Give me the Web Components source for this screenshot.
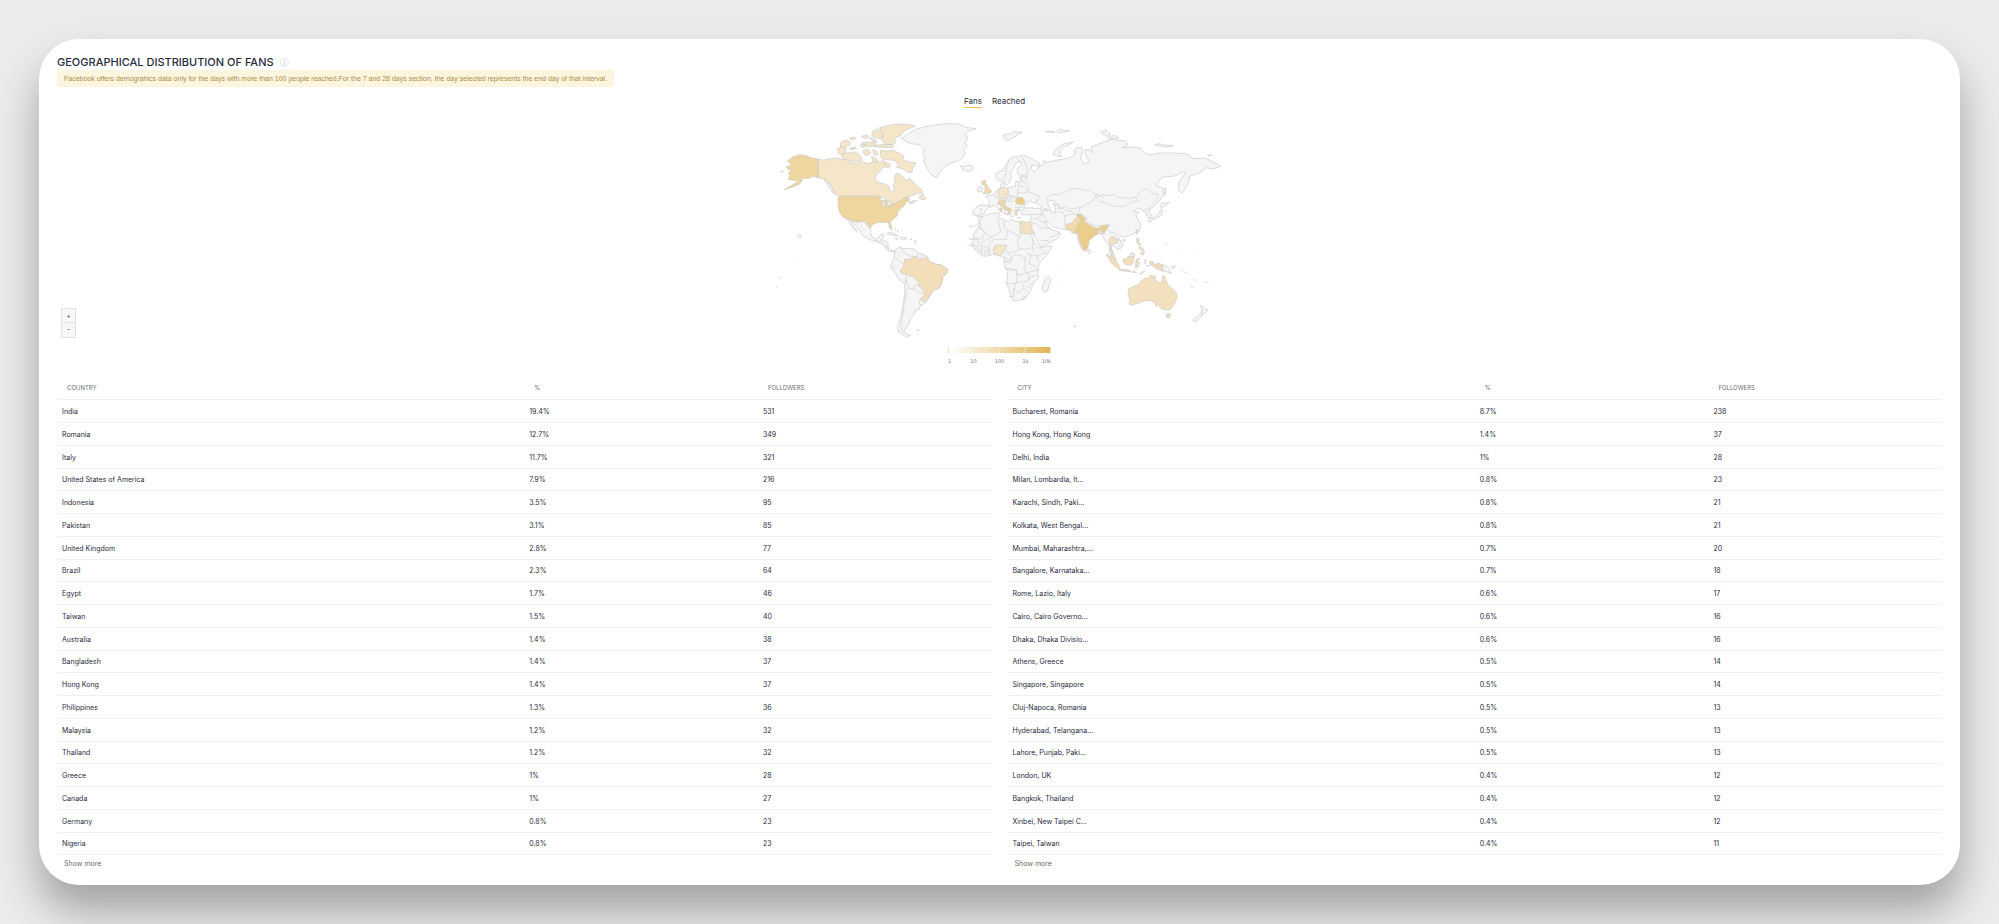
<!DOCTYPE html>
<html lang="en">
<head>
<meta charset="utf-8">
<title>Geographical distribution of fans</title>
<style>
  body {
    margin: 0;
    min-height: 100vh;
    box-sizing: border-box;
    padding: 39px;
    background: #ebebeb;
    font-family: Inter, "Liberation Sans", sans-serif;
    color: #2a2a3c;
  }
</style>
</head>
<body>
<report-card>
  <section-title slot="head">GEOGRAPHICAL DISTRIBUTION OF FANS</section-title>
  <info-notice slot="head">Facebook offers demograhics data only for the days with more than 100 people reached.For the 7 and 28 days section, the day selected represents the end day of that interval.</info-notice>
  <view-tabs></view-tabs>
  <fans-map></fans-map>
  <ranking-table slot="tables" kind="country"></ranking-table>
  <ranking-table slot="tables" kind="city"></ranking-table>
</report-card>

<script>
function define(name, html, setup) {
  const template = document.createElement('template');
  template.innerHTML = html;
  customElements.define(name, class extends HTMLElement {
    constructor() {
      super();
      this.attachShadow({ mode: 'open' }).append(template.content.cloneNode(true));
    }
    connectedCallback() {
      if (setup && !this.ready) { this.ready = true; setup(this, this.shadowRoot); }
    }
  });
}

define('report-card', `
<style>
  :host {
    display: flex; flex-direction: column;
    padding: 15px 18px 13px;
    background: #fff;
    border-radius: 40px;
    box-shadow: 0 26px 42px rgba(0, 0, 0, .31);
  }
  .head { display: flex; flex-direction: column; align-items: flex-start; }
  .tables { display: grid; grid-template-columns: 1fr 1fr; gap: 16px; margin-top: 11px; }
</style>
<div class="head"><slot name="head"></slot></div>
<slot></slot>
<div class="tables"><slot name="tables"></slot></div>
`);

define('section-title', `
<style>
  :host { display: flex; align-items: center; gap: 6px; height: 16px; }
  h1 { margin: 0; font: 500 11px/16px Inter, sans-serif; }
  svg { width: 9px; height: 9px; display: block; }
</style>
<h1><slot></slot></h1>
<svg viewBox="0 0 18 18" aria-hidden="true">
  <circle cx="9" cy="9" r="8" fill="#fff" stroke="#e1e4e9" stroke-width="2"/>
  <path d="M9 4v2M7 8h2v5M7 13h4" fill="none" stroke="#d3d7de" stroke-width="2"/>
</svg>
`);

define('info-notice', `
<style>
  :host {
    display: block; padding: 0 7px;
    background: #fef5df; color: #a88d4c;
    font: 7px/17px "Liberation Sans", sans-serif;
  }
</style>
<slot></slot>
`);

define('view-tabs', `
<style>
  :host { display: flex; justify-content: center; gap: 10px; margin: 9px 0 7px; padding-right: 10px; }
  button {
    padding: 0; border: 0; background: none; color: inherit;
    border-bottom: 1px solid transparent;
    font: 8px/11px Inter, sans-serif; cursor: pointer;
  }
  button[aria-pressed="true"] { border-color: #f3bf52; }
</style>
<button type="button" aria-pressed="true">Fans</button>
<button type="button" aria-pressed="false">Reached</button>
`);

define('fans-map', `
<style>
  :host { display: grid; grid-template-columns: 1fr 480px 1fr; }
  .zoom { align-self: end; margin: 0 0 2px 4px; width: 15px; display: flex; flex-direction: column; }
  .zoom button {
    box-sizing: border-box; height: 15px; padding: 0;
    border: 1px solid #e3e3e3; background: #f7f7f7; color: #555;
    font: 7px/12px Inter, sans-serif;
  }
  .zoom button + button { border-top: 0; }
  svg { display: block; width: 480px; height: 225px; }
  .legend { grid-column: 2; justify-self: center; width: 103px; margin-top: 7px; }
  .bar {
    height: 6px; display: flex; justify-content: space-between;
    background: linear-gradient(90deg, #fff, #f1dbaa 50%, #e3b353);
  }
  .bar i { width: 1px; background: #e9e3d8; }
  .labels {
    display: grid; grid-template-columns: 13px 25px 27px 25px 13px; margin-top: 4px;
    text-align: center; font: 5px/8px "DejaVu Sans", sans-serif; color: #777;
  }
  .labels :first-child { text-align: left; }
  .labels :last-child { text-align: right; }
  .land { fill: #f5f5f5; stroke: #c9c9c9; stroke-width: 2; stroke-linejoin: round; }
  .line { fill: none; stroke: #cfcfcf; stroke-width: 2; stroke-linejoin: round; }
  .sea { fill: #fff; stroke: #c9c9c9; stroke-width: 2; }
  .a { fill: #ecce8c; } .b { fill: #efd69f; } .c { fill: #f1dbab; }
  .d { fill: #f2dfb9; } .e { fill: #f3e0be; } .f { fill: #f5e6c9; }
</style>
<div class="zoom">
  <button type="button" aria-label="Zoom in">+</button>
  <button type="button" aria-label="Zoom out">-</button>
</div>
<svg viewBox="0 90 1440 675" role="img" aria-label="World map of fans">
  <g class="land">
    <!-- Greenland, Iceland -->
    <path d="M424 160L436 152 470 132 500 124 532 119 560 116 600 117 612 124 620 128 648 131 624 140 616 150 624 162 614 172 622 182 610 196 616 206 608 218 596 226 580 232 560 240 548 252 538 264 530 278 518 272 508 262 498 244 490 228 496 216 488 206 494 196 484 184 474 178 452 176 440 170z"/>
    <path d="M600 244l8-2 4 4 8-4 14-1 6 8-6 8-12 3-10-4-6-4 4-2z"/>
    <!-- Canada -->
    <path class="f" d="M175 222L191 226 205 222 229 219 247 223 261 224 271 232 291 236 311 232 325 236 337 232 345 222 357 234 367 226 375 230 377 240 366 250 360 260 350 268 345 284 360 294 378 298 388 306 392 320 398 322 402 310 400 298 406 288 402 276 410 264 420 268 430 276 438 286 448 280 460 290 470 302 484 312 487 322 470 326 450 334 436 340 450 342 444 350 440 336 430 340 420 348 408 356 396 356 388 350 378 346 364 342 356 334 238 334 226 326 218 308 206 292 192 282 175 278z"/>
    <path class="f" d="M478 334l10-10 2 10 8 6-4 4-14-2zM446 352l12-4 12-2-10 8-12 2zM232 190l12-4 16 4-6 14-10 6-8-4zM248 210l14-8 12 2 8-4 12 6 8 8 6 14-16 2-16-2-18-4-12-6zM268 190l14-4 8 4-14 4zM300 180l14-2 6 6-14 4zM310 196l14-4 8 12-10 8-10-4zM338 194l12 4 4 10-12 2zM334 214l14 6 8 10-16 2zM240 176l10-8 14-2 6 4 0 10-14 6-14 0zM268 160l12-4 8 4-8 4zM304 154l14-4 10 4-8 6-12-2zM306 172l20 0 18 2 0 10-16 0-18-6zM330 158l14 4 8 10-12 0zM344 180l54-2 4 6-10 4-46-2zM336 142l14-10 14 8 6 14-8 8-12-4-14-4zM358 128l24-6 20-4 30-1 34 5-14 8-20 8-10 14-18 8 2 14-20 6-16-8-6-14 8-10-8-8zM362 196l18 2 20-2 16 8 16 10-4 8 16 8 24 4-4 6-6 8-2 14-12 0-18-12-16-2 4-10-10-12-24-2-12-2-8-10zM376 234l10 0 6 8-8 6-12-4 4-4z"/>
    <!-- Alaska and the contiguous states -->
    <path class="b" d="M175 222L153 218 139 212 119 209 98 216 82 228 88 234 98 238 78 246 84 254 98 252 84 264 90 272 84 282 98 286 110 286 112 292 92 302 72 314 98 306 120 296 130 280 146 280 160 274 175 278z"/>
    <path d="M192 282L206 294 216 308 222 322 228 328 218 324 208 308 196 290zM62 259l8 0-4 3z"/>
    <path class="b" d="M238 334L356 334 364 340 376 344 388 350 388 358 398 358 410 354 424 346 436 338 446 336 446 346 436 354 432 364 424 368 414 380 412 392 400 402 390 412 396 426 394 434 388 428 386 414 374 412 358 412 342 416 334 422 332 430 324 424 316 412 306 408 298 412 276 408 262 402 248 396 240 384 235 368 234 350 234 338z"/>
    <path class="sea" d="M356 342l10-5 12 6 2 4-10 0-6-2zM368 350l5-2 1 14-6 4zM380 348l8 2 4 6-4 6-4-4zM386 366l12-5-2 4z"/>
    <!-- Mexico, Central America, Caribbean -->
    <path d="M262 403L276 408 298 412 306 408 316 412 324 424 332 430 332 444 336 456 346 462 356 458 360 450 372 448 370 458 364 464 376 468 384 472 384 486 388 496 398 498 408 496 406 502 394 500 380 494 372 480 356 472 346 470 330 464 312 454 304 446 300 436 290 426 284 416 276 410 280 422 290 436 292 442 284 436 272 420z"/>
    <path class="line" d="M344 466l10 0 4 4M362 466l-2 8M376 470l-10 6M384 486l-10-2"/>
    <path d="M380 446l10-4 14 4 12 8-12-2-12-4zM420 458l8-2 14 4-8 4-12-2zM406 460l8 2-8 0zM450 462l6 0-6 2zM404 430l4 4-4-2zM412 436l4 6-4-4zM466 466l1 4-2 6zM118 448l6 6-4 6-8-8z"/>
  </g>
  <g class="land" transform="translate(0 345)">
    <!-- South America -->
    <path d="M404 156L410 146 422 140 428 146 440 145 462 147 474 158 488 162 502 170 508 184 526 192 546 196 563 208 560 220 548 232 546 248 538 264 524 270 514 278 508 292 496 306 490 312 480 316 478 328 466 332 462 344 450 356 448 370 440 382 434 394 438 402 452 406 440 412 428 404 418 398 412 380 416 372 422 350 428 320 434 284 434 250 420 242 406 220 392 202 394 190 400 178 404 166z"/>
    <path class="d" d="M432 190L434 178 454 178 460 168 470 170 474 178 488 176 500 170 508 184 526 192 546 196 563 208 560 220 548 232 546 248 538 264 524 270 514 278 508 292 496 306 480 298 494 286 490 270 480 262 476 248 462 232 438 222 424 220 420 210 430 202z"/>
    <path class="line" d="M424 142l2 12 10 8 14 4 2 12M406 176l10 4 14 12M398 196l6 6-8 8M436 222l2 14-2 14M438 238l8 26 16 4 4-14 14 4M462 266l12 12 16 4M444 262l-6 24-6 30-4 34-6 28 8 20M480 298l-2 14 8 6M472 158l2 16M486 164l-2 12"/>
    <path d="M470 390l8 0-4 3zM58 232l7 2M48 262l4 1M113 176l2 1M628 76l4 0M602 127l3 1"/>
  </g>

  <g class="land" transform="translate(600 0)">
    <!-- Arctic islands -->
    <path d="M128 152l10-4 16-2 6-6 26 2-14 6-4 6-12 4-8 8-8 0-8-6zM256 140l18-2 10 4-8 1zM290 138l10-6 10 4 18 2-12 3-20 3zM280 210l4-14 14-10 14-10 28-5-14 10-16 6-10 10-2 12 8 4-8 2zM424 140l14-4 10 8 0 10 20-2 8 8-14 2-16-2-8-10-12-4zM586 180l10-4 20 4 24 2-14 4-22-2zM742 210l14 0-6 2zM64 266l1 3M84 276l2 3"/>
    <!-- Eurasian mainland -->
    <path d="M58 360l28 2 2-17-12-11 14-4 12 0 4-8 8-8 8-5 0-13 8-6 4 8-4 10 12 2 16-6 8 0 2-16 8 2 8-2-6-8 2-4 22-2-4-4-14 2-12-8 0-14 14-12-6-10-12 6-8 16-10 12 4 14-4 14-10 12-6-6-6-10-12 2-8-10 0-14 20-8 12-20 10-16 20-6 20-3 14 5 16 8 20 12-2 8-22-4-4 10 10 12 6-8 12-10 12-6-2-10 12 4 28-6 20-4 20-4 16-12-4-8 6-9 16-3 4 12-6 20 10 20 16-10-12-18-2-16 16 0 8 9-4-17 34-14 30-10 15 4 25 2 5 12-15 8 30-2 25 4 7 10 18 10 30-6 40 0 40 2 20 14 40 0 40 20 4 4-24 8-20-4-20 16-30 10 0 14-10 18-12 18-10-8 0-20 10-20 12-12-8-4-22 12-10 2-30 2-22 24 12 4 12 6 0 22-12 16-16 14-8 6-8 12 8 10-2 10-10-2-4-14-12-10-8-4-8 0-10 10 18 2-10 10 8 16 7 12-5 16-20 12-20 6-12 2-8-2-4 4 14 18-2 12-14 6-12-14-10 0 6 16 8 15 2 14-8-6-10-16 0-16-6-16-8-4-8-18 10-20-26 18-8 4-19 16 1 14-10 18-10-8-10-24-2-16-8-6-11-8-19-4-16-2-20-6-10-10-10-6-4 2 14 18 8 4 8 4 16 6 2 4-10 14-26 14-24 10-6-8-12-26-12-28-2-8 2-12 4-12-6-2-24 0-4-12-4-4-14 20-10 2-8-12-4-14-10-10-14-6 6 14 14 10-6 10-6-8-14-10-10-10-8 6-10 4-6 6-6 12-12 4-12 0-10-2 2-14z"/>
    <path class="sea" d="M194 362l8-12 12-2 6 6 8-2 16 12 0 6-16 0-18-2-14 2zM262 354l10-8 12 2-4 10 6 8 0 16-10 2-6-14z"/>
    <path class="line" d="M58 372l6-2 0 16M84 362l14 4M100 330l14 10 2 8-4 12M114 340l28 0M142 310l2 20 16 4M174 306l0 18-4 12-28 0M116 350l16-4 16-2 16-8M160 348l-16 2M176 290l0 12 14 2 14 16-16 4-16 0M184 288l12 4 8 14 4 16 28 10-2 14-10 4M180 276l8 12M170 336l16 2M164 366l12 2 18-4M202 274l-6 12M188 216l8 20 8 20-4 16M170 218l12 16M150 222l-10 20-2 20-6 18M192 370l-6 8M246 368l20 6-20 4-6-6M246 378l2 10-30 0M248 388l-18 14-12 0M230 402l20 10 12-2M248 386l6 14 8 10M268 376l-16-2M284 378l26 6 4 8 0 20 4 20M292 370l14 0 16 8 22 4M262 350l-2-12 14-10 26 2 16-10 20-8 22-2 14 8 18-4 10 10 24 10 8 6M314 392l24-4 10-2 12 4M408 330l-8 14-10 10-16 6-14 8-4 14 0 8M280 358l16 0 0 12 20-6 14 8 18-2 12-4M408 334l20-6 16 4 22-4 8 10 34 2 22-4M408 334l12 16 20 4 22 10 30 0 24-14 20-2-12-14M532 334l8-14 20-10 14 14 22 6-6 14-10 12M548 378l14-6 18-6M360 386l18 10 4 14 22 12 20 0 20-2 4-4M448 418l-8 12 10 12 14 0M464 444l8 12M450 452l10 12 16-2 14 18M474 484l8-2M222 412l6 2 14 14 30 2M270 456l20-6 8-8M242 468l26-2M212 420l10-6"/>
    <!-- Ireland, Sri Lanka, Japan, Hainan -->
    <path d="M54 308l10-4 4 6-4 10-12 0zM384 492l6 2 2 8-6 4-4-6zM604 370l-4-12 6-6 10 4 12-4-10 8-8 6zM604 372l4 8-6 12-10 6-8 4-8 2-4 8-8-4 6-8 14-4 10-8zM614 332l2-18-2-6 4 10zM488 464l6-2 2 6-6 1z"/>
    <!-- Countries with fans in Europe and South Asia -->
    <path class="c" d="M66 288l10-2 0 8 6 6 4 10 8 6-2 8-18 2-6-2 8-8-2-6 2-6-6-4-6-4z"/>
    <path class="f" d="M114 314l10-6 10 0 10 4 2 14-10 2 6 8-4 6-16 0-2-6-6-8z"/>
    <path class="b" d="M114 350l8-2 8-2 8 2 0 4-6 4 8 10 10 4 6 6-4 2-2 8-4 2 0-8-8-6-10-8-6-8-8 0zM120 370l5 0-1 10-5 0zM136 386l10 0-2 5z"/>
    <path class="a" d="M168 342l6-4 14 0 6 10-2 10-20 0-6-8z"/>
    <path class="e" d="M164 376l10-4 4 2-8 4 2 6-2 8-4-6zM172 398l10 0-8 2z"/>
    <path class="c" d="M316 432l4-14 16-4 6-10 8-6 0-8 12-2 6 10-8 8-2 10-4 14-8 14-10 0-4-8z"/>
    <path class="a" d="M352 390L360 387 368 396 376 400 374 410 386 418 400 426 412 430 424 424 438 420 446 422 438 434 432 448 424 434 414 434 416 446 404 452 388 466 386 480 380 494 374 499 366 486 358 466 354 446 344 444 342 438 350 436 348 426 360 412 362 402z"/>
    <path class="e" d="M413 432l8 2 4 4-2 10-8-2zM448 462l12-8 4 6 10 4-2 10-14 2-4 12 4 18-6-8-2-16z"/>
    <path class="e" d="M528 434l6 2-2 12-4-4zM530 460l6 0 0 12 8 8-10-2-4-8zM534 488l6-4 10 8-8 2zM544 500l6-6 4 8-4 8-8-2zM452 506l10 6 6 10 0 10-8-8z"/>
  </g>

  <g class="land" transform="translate(600 345)">
    <!-- Africa -->
    <path d="M52 48l14 2 20-8 26-4 6 2-2 12 18 8 12 4 6-6 14 6 20 2 10 0 4 14 8 18 8 16 10 18 10 12 20-4 20-3-6 14-16 22-14 14-6 16 0 16 2 14-12 10-8 16-4 14-10 14-14 12-12 2-16 2-6-12-6-20-8-20 2-20 2-18-8-12-4-12 2-14-10-6-22-6-16 4-16 2-14-10-10-10-10-14 2-10 4-10-2-12 12-16 8-14z"/>
    <path d="M250 250l8-14 8-8 6 12-4 14-6 20-8 4-8-10z"/>
    <path class="line" d="M66 50l-4 14-18 14-16 4M60 68l0 14 14 14-6 20-40 2M52 78l42 34 28-16-4-20-6-20M130 60l2 22 12 10 38 18M94 112l-18 8-12 10 0 8 18 4 6 24M144 92l-6 18 2 8-40 0-12 16 2 28M28 116l24 0 6 22-26-2M26 134l14 2M44 150l8-8 8 10-2 8M64 142l4 24M76 166l0-18M178 106l-6 22 8 20 30-2 8-8 2 16M224 100l-6 16 0 20M146 160l28-8 2-8M138 150l18 26-16 8M146 178l-18-6M132 184l20 4 4-16 8-8 24 4 10 8M200 160l12 4-4 26-4-4M212 164l20 4 30-12M240 146l12 10M232 168l0 14M198 168l-4 12 2 12-4 14 8 12-14 6-16 0 0-14-36-6M134 206l34 4 4 20-4 22-34-4M208 190l22 12M200 218l24-6 10-4M200 218l8 8-6 18-22 2-14 2M202 244l10-14 18-4M168 250l-6 14-2 26-14 0M162 264l12 14 18-14-6-12M190 264l18 16M192 288l6 4-6 8-6-6zM208 252l10 0M202 258l8 6"/>
    <path class="e" d="M180 65L196 67 212 65 216 76 212 80 222 101 181 101z"/>
    <path class="f" d="M104 138l12-4 24 2-2 8-12 18-8 6-8-6-8-2-2-10z"/>
    <!-- South-east Asia and Oceania -->
    <path class="d" d="M438 162l10 6 12 10 14 14 6 8-2 8-10-6-14-14zM478 208l16 0 18 4-2 3-20-2-12-2zM488 178l8 0 12-6 8-14 8 4-2 10-2 16-8 8-14-2-8-8zM528 182l10-4 2-2-10 2 4 8 6 2-6 4 4 10-6-6-4 10-2-12zM568 184l12 2 4 8 10-4 14 4 0 20-18-8-12-8-8-6z"/>
    <path d="M502 172l12-8 8-4 2 8-10 2zM516 215l6 0 8 2-14 0zM538 222l8-6 8-2-8 6zM556 178l2 10-4 4zM560 196l8 0-6 3zM608 194l14 6 6 6-2 6 10 8-10-2-8-4-10 0zM632 202l12-6 4 4-12 6zM664 210l6 4M672 216l6 2M700 236l6 6M690 258l10 6M736 248l10-4M616 134l6-4M582 156l2 0M714 157l2 0M668 158l2 0M250 224l2 2M300 257l2 1M291 200l2 1M358 163l4 1M342 379l6 0 0 1-6 0z"/>
    <path class="e" d="M506 266L518 260 536 254 544 242 556 234 564 236 570 226 588 230 584 240 598 248 606 246 608 228 612 226 618 240 624 254 638 266 650 280 651 294 642 312 632 328 618 330 604 326 596 316 588 318 584 308 572 302 556 302 534 310 514 316 508 312 510 300 504 284z"/>
    <path class="e" d="M618 342l14 0-2 10-8 2z"/>
    <path d="M722 316l6 6 6 6 10 2-8 8-6 4-6-2 2-10zM724 340l4 4-10 12-10 10-10-4 8-8 10-8z"/>
  </g>
</svg>
<div class="legend">
  <div class="bar"><i></i><i></i><i></i><i></i><i></i></div>
  <div class="labels"><span>1</span><span>10</span><span>100</span><span>1k</span><span>10k</span></div>
</div>
`);

const rankings = {
  country: {
    heading: 'COUNTRY',
    rows: [
      ['India', '19.4%', 531], ['Romania', '12.7%', 349], ['Italy', '11.7%', 321],
      ['United States of America', '7.9%', 216], ['Indonesia', '3.5%', 95], ['Pakistan', '3.1%', 85],
      ['United Kingdom', '2.8%', 77], ['Brazil', '2.3%', 64], ['Egypt', '1.7%', 46],
      ['Taiwan', '1.5%', 40], ['Australia', '1.4%', 38], ['Bangladesh', '1.4%', 37],
      ['Hong Kong', '1.4%', 37], ['Philippines', '1.3%', 36], ['Malaysia', '1.2%', 32],
      ['Thailand', '1.2%', 32], ['Greece', '1%', 28], ['Canada', '1%', 27],
      ['Germany', '0.8%', 23], ['Nigeria', '0.8%', 23],
    ],
  },
  city: {
    heading: 'CITY',
    rows: [
      ['Bucharest, Romania', '8.7%', 238], ['Hong Kong, Hong Kong', '1.4%', 37], ['Delhi, India', '1%', 28],
      ['Milan, Lombardia, It...', '0.8%', 23], ['Karachi, Sindh, Paki...', '0.8%', 21],
      ['Kolkata, West Bengal...', '0.8%', 21], ['Mumbai, Maharashtra,...', '0.7%', 20],
      ['Bangalore, Karnataka...', '0.7%', 18], ['Rome, Lazio, Italy', '0.6%', 17],
      ['Cairo, Cairo Governo...', '0.6%', 16], ['Dhaka, Dhaka Divisio...', '0.6%', 16],
      ['Athens, Greece', '0.5%', 14], ['Singapore, Singapore', '0.5%', 14],
      ['Cluj-Napoca, Romania', '0.5%', 13], ['Hyderabad, Telangana...', '0.5%', 13],
      ['Lahore, Punjab, Paki...', '0.5%', 13], ['London, UK', '0.4%', 12],
      ['Bangkok, Thailand', '0.4%', 12], ['Xinbei, New Taipei C...', '0.4%', 12],
      ['Taipei, Taiwan', '0.4%', 11],
    ],
  },
};

define('ranking-table', `
<style>
  :host { display: block; }
  table { width: 100%; table-layout: fixed; border-collapse: separate; border-spacing: 0; }
  th, td { box-sizing: border-box; text-align: left; border-bottom: 1px solid #f1f1f2; white-space: nowrap; }
  th { height: 24px; padding: 0 10px; font: 6px/8px Inter, sans-serif; color: #6c6c74; }
  th:first-child { width: 50%; }
  td { height: 23px; padding: 0 5px; font: 7px/9px Inter, sans-serif; }
  tr:nth-child(4n) td { height: 22px; }
  a { display: block; width: max-content; padding-left: 7px; font: 7px/17px Inter, sans-serif; color: #6c6c6c; text-decoration: none; }
</style>
<table>
  <thead><tr><th></th><th>%</th><th>FOLLOWERS</th></tr></thead>
  <tbody></tbody>
</table>
<a href="#more">Show more</a>
`, (host, root) => {
  const { heading, rows } = rankings[host.getAttribute('kind')];
  root.querySelector('th').textContent = heading;
  const body = root.querySelector('tbody');
  for (const row of rows) {
    const tr = body.insertRow();
    for (const value of row) tr.insertCell().textContent = value;
  }
});
</script>
</body>
</html>
